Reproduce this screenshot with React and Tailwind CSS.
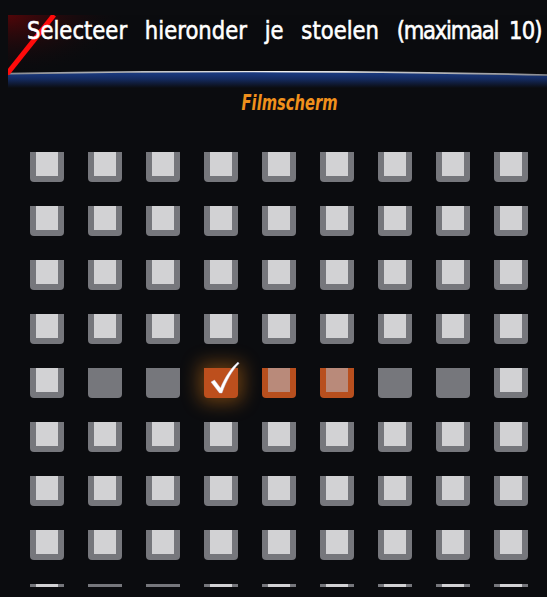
import { Fragment } from "react";

// n = vrij, o = bezet, s = gekozen, p = voorgesteld
const rows = [
  "nnnnnnnnn",
  "nnnnnnnnn",
  "nnnnnnnnn",
  "nnnnnnnnn",
  "noosppoon",
  "nnnnnnnnn",
  "nnnnnnnnn",
  "nnnnnnnnn",
  "noonnnnnn",
];

function Seat({ state }) {
  if (state === "o") {
    return <div className="h-[30px] w-[34px] rounded-b-[4px] bg-[#76777c]" />;
  }
  if (state === "s") {
    return (
      <div className="relative h-[30px] w-[34px] rounded-b-[4px] bg-[#bd4f1d] shadow-[0_0_18px_5px_rgba(214,120,20,0.45)]">
        <svg className="absolute left-0 top-[-8px]" width="40" height="40" viewBox="0 0 40 40">
          <path
            d="M7 22 L10.5 20 L16.5 28 C21 17 27 8 34 2 L35 3.5 C28.5 10 22.5 20 18 33 L15.5 33 Z"
            fill="#fff"
            stroke="#c8d4ff"
            strokeWidth="0.4"
          />
        </svg>
      </div>
    );
  }
  const outer = state === "p" ? "bg-[#b84f1e]" : "bg-[#76777c]";
  const inner = state === "p" ? "bg-[#b98a7a]" : "bg-[#d2d2d4]";
  return (
    <div className={`h-[30px] w-[34px] rounded-b-[4px] px-[6px] pb-[6px] ${outer}`}>
      <div className={`h-full w-full ${inner}`} />
    </div>
  );
}

export default function App() {
  return (
    <div className="min-h-[597px] bg-[#0b0c0f] pt-[15px] font-['DejaVu_Sans',sans-serif]">
      <header className="relative ml-2 overflow-hidden bg-[#0a0b0e]">
        <svg className="absolute left-0 top-0" width="120" height="60" viewBox="0 0 120 60">
          <defs>
            <radialGradient id="glow" cx="0" cy="0" r="1">
              <stop offset="0" stopColor="#5a0508" stopOpacity="0.9" />
              <stop offset="1" stopColor="#0a0b0e" stopOpacity="0" />
            </radialGradient>
          </defs>
          <rect width="120" height="60" fill="url(#glow)" />
          <line x1="-1" y1="59" x2="46" y2="0" stroke="#ff0b0b" strokeWidth="5" />
        </svg>
        <h1 className="relative h-[56px] whitespace-nowrap pl-[19px] text-[25px] leading-[31px] text-white [-webkit-text-stroke:0.6px_#fff]">
          <span className="inline-block origin-left scale-x-[0.847] [word-spacing:13px]">
            Selecteer hieronder je stoelen{" "}
            <span className="tracking-[-1.5px]">(maximaal</span>
            <span className="[word-spacing:5px]">{" "}</span>
            <span className="tracking-[-1px]">10)</span>
          </span>
        </h1>
        <svg className="block h-[17px] w-full" viewBox="0 0 539 17" preserveAspectRatio="none">
          <defs>
            <linearGradient id="blue" x1="0" y1="0" x2="0" y2="1">
              <stop offset="0" stopColor="#1c3d86" />
              <stop offset="0.45" stopColor="#142a5e" />
              <stop offset="1" stopColor="#0b0c0f" />
            </linearGradient>
            <linearGradient id="rim" x1="0" y1="0" x2="1" y2="0">
              <stop offset="0" stopColor="#8a8c92" />
              <stop offset="0.5" stopColor="#f2f2f2" />
              <stop offset="1" stopColor="#8a8c92" />
            </linearGradient>
          </defs>
          <path d="M0 3 Q270 -2 539 4.5 L539 17 L0 17 Z" fill="url(#blue)" />
          <path d="M0 2.6 Q270 -2.4 539 4" fill="none" stroke="url(#rim)" strokeWidth="1.6" />
        </svg>
      </header>

      <p className="mt-[3px] whitespace-nowrap pl-[32px] text-center text-[21px] font-bold italic leading-[24px] text-[#f0901c]">
        <span className="inline-block origin-center scale-x-[0.7]">Filmscherm</span>
      </p>

      <div className="mt-[37px] h-[435px] overflow-hidden pl-[30px]">
        <div className="grid w-max grid-cols-[repeat(9,34px)] gap-x-[24px] gap-y-[24px]">
          {rows.map((row, r) => (
            <Fragment key={r}>
              {row.split("").map((s, c) => (
                <Seat key={c} state={s} />
              ))}
            </Fragment>
          ))}
        </div>
      </div>
    </div>
  );
}
